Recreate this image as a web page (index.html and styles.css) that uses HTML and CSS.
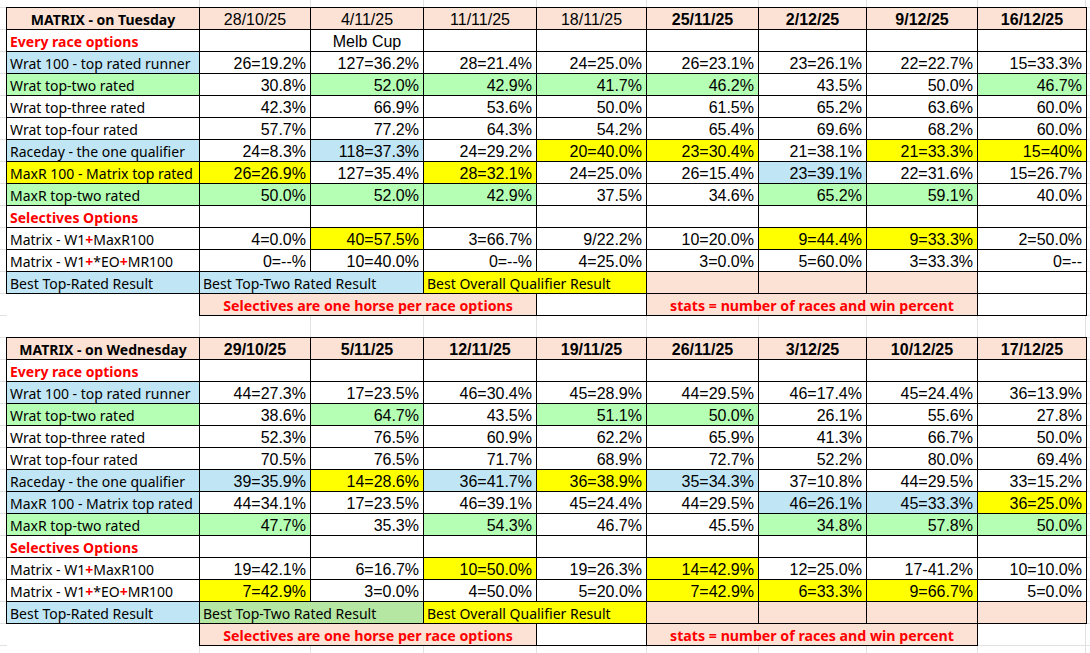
FILE: index.html
```html
<!DOCTYPE html>
<html>
<head>
<meta charset="utf-8">
<link rel="stylesheet" href="styles.css">
</head>
<body>
<div class="sheet">
<table class="matrix">
  <colgroup>
    <col class="c-a"><col class="c-b"><col class="c-c"><col class="c-d"><col class="c-e"><col class="c-f"><col class="c-g"><col class="c-h"><col class="c-i">
  </colgroup>
  <tr class="head">
    <td class="title">MATRIX - on Tuesday</td>
    <td class="date">28/10/25</td><td class="date">4/11/25</td><td class="date">11/11/25</td><td class="date">18/11/25</td>
    <td class="date bold">25/11/25</td><td class="date bold">2/12/25</td><td class="date bold">9/12/25</td><td class="date bold">16/12/25</td>
  </tr>
  <tr>
    <td class="lbl section">Every race options</td>
    <td></td><td class="note">Melb Cup</td><td></td><td></td><td></td><td></td><td></td><td></td>
  </tr>
  <tr>
    <td class="lbl blue">Wrat 100 - top rated runner</td>
    <td class="num">26=19.2%</td><td class="num">127=36.2%</td><td class="num">28=21.4%</td><td class="num">24=25.0%</td><td class="num">26=23.1%</td><td class="num">23=26.1%</td><td class="num">22=22.7%</td><td class="num">15=33.3%</td>
  </tr>
  <tr>
    <td class="lbl green">Wrat top-two rated</td>
    <td class="num">30.8%</td><td class="num green">52.0%</td><td class="num green">42.9%</td><td class="num green">41.7%</td><td class="num green">46.2%</td><td class="num">43.5%</td><td class="num">50.0%</td><td class="num green">46.7%</td>
  </tr>
  <tr>
    <td class="lbl">Wrat top-three rated</td>
    <td class="num">42.3%</td><td class="num">66.9%</td><td class="num">53.6%</td><td class="num">50.0%</td><td class="num">61.5%</td><td class="num">65.2%</td><td class="num">63.6%</td><td class="num">60.0%</td>
  </tr>
  <tr>
    <td class="lbl">Wrat top-four rated</td>
    <td class="num">57.7%</td><td class="num">77.2%</td><td class="num">64.3%</td><td class="num">54.2%</td><td class="num">65.4%</td><td class="num">69.6%</td><td class="num">68.2%</td><td class="num">60.0%</td>
  </tr>
  <tr>
    <td class="lbl blue">Raceday - the one qualifier</td>
    <td class="num">24=8.3%</td><td class="num blue">118=37.3%</td><td class="num">24=29.2%</td><td class="num yellow">20=40.0%</td><td class="num yellow">23=30.4%</td><td class="num">21=38.1%</td><td class="num yellow">21=33.3%</td><td class="num yellow">15=40%</td>
  </tr>
  <tr>
    <td class="lbl yellow">MaxR 100 - Matrix top rated</td>
    <td class="num yellow">26=26.9%</td><td class="num">127=35.4%</td><td class="num yellow">28=32.1%</td><td class="num">24=25.0%</td><td class="num">26=15.4%</td><td class="num blue">23=39.1%</td><td class="num">22=31.6%</td><td class="num">15=26.7%</td>
  </tr>
  <tr>
    <td class="lbl green">MaxR top-two rated</td>
    <td class="num green">50.0%</td><td class="num green">52.0%</td><td class="num green">42.9%</td><td class="num">37.5%</td><td class="num">34.6%</td><td class="num green">65.2%</td><td class="num green">59.1%</td><td class="num">40.0%</td>
  </tr>
  <tr>
    <td class="lbl section">Selectives Options</td>
    <td></td><td></td><td></td><td></td><td></td><td></td><td></td><td></td>
  </tr>
  <tr>
    <td class="lbl">Matrix - W1<span class="plus">+</span>MaxR100</td>
    <td class="num">4=0.0%</td><td class="num yellow">40=57.5%</td><td class="num">3=66.7%</td><td class="num">9/22.2%</td><td class="num">10=20.0%</td><td class="num yellow">9=44.4%</td><td class="num yellow">9=33.3%</td><td class="num">2=50.0%</td>
  </tr>
  <tr>
    <td class="lbl">Matrix - W1<span class="plus">+</span>*EO<span class="plus">+</span>MR100</td>
    <td class="num">0=--%</td><td class="num">10=40.0%</td><td class="num">0=--%</td><td class="num">4=25.0%</td><td class="num">3=0.0%</td><td class="num">5=60.0%</td><td class="num">3=33.3%</td><td class="num">0=--</td>
  </tr>
  <tr>
    <td class="lbl blue">Best Top-Rated Result</td>
    <td class="lbl blue" colspan="2">Best Top-Two Rated Result</td>
    <td class="lbl yellow" colspan="2">Best Overall Qualifier Result</td>
    <td class="peach"></td><td class="peach"></td><td class="peach"></td><td></td>
  </tr>
  <tr>
    <td class="blank"></td>
    <td class="banner peach" colspan="3">Selectives are one horse per race options</td>
    <td></td>
    <td class="banner peach" colspan="3">stats = number of races and win percent</td>
    <td></td>
  </tr>
</table>

<table class="matrix">
  <colgroup>
    <col class="c-a"><col class="c-b"><col class="c-c"><col class="c-d"><col class="c-e"><col class="c-f"><col class="c-g"><col class="c-h"><col class="c-i">
  </colgroup>
  <tr class="head">
    <td class="title">MATRIX - on Wednesday</td>
    <td class="date bold">29/10/25</td><td class="date bold">5/11/25</td><td class="date bold">12/11/25</td><td class="date bold">19/11/25</td>
    <td class="date bold">26/11/25</td><td class="date bold">3/12/25</td><td class="date bold">10/12/25</td><td class="date bold">17/12/25</td>
  </tr>
  <tr>
    <td class="lbl section">Every race options</td>
    <td></td><td></td><td></td><td></td><td></td><td></td><td></td><td></td>
  </tr>
  <tr>
    <td class="lbl blue">Wrat 100 - top rated runner</td>
    <td class="num">44=27.3%</td><td class="num">17=23.5%</td><td class="num">46=30.4%</td><td class="num">45=28.9%</td><td class="num">44=29.5%</td><td class="num">46=17.4%</td><td class="num">45=24.4%</td><td class="num">36=13.9%</td>
  </tr>
  <tr>
    <td class="lbl green">Wrat top-two rated</td>
    <td class="num">38.6%</td><td class="num green">64.7%</td><td class="num">43.5%</td><td class="num green">51.1%</td><td class="num green">50.0%</td><td class="num">26.1%</td><td class="num">55.6%</td><td class="num">27.8%</td>
  </tr>
  <tr>
    <td class="lbl">Wrat top-three rated</td>
    <td class="num">52.3%</td><td class="num">76.5%</td><td class="num">60.9%</td><td class="num">62.2%</td><td class="num">65.9%</td><td class="num">41.3%</td><td class="num">66.7%</td><td class="num">50.0%</td>
  </tr>
  <tr>
    <td class="lbl">Wrat top-four rated</td>
    <td class="num">70.5%</td><td class="num">76.5%</td><td class="num">71.7%</td><td class="num">68.9%</td><td class="num">72.7%</td><td class="num">52.2%</td><td class="num">80.0%</td><td class="num">69.4%</td>
  </tr>
  <tr>
    <td class="lbl blue">Raceday - the one qualifier</td>
    <td class="num blue">39=35.9%</td><td class="num yellow">14=28.6%</td><td class="num blue">36=41.7%</td><td class="num yellow">36=38.9%</td><td class="num blue">35=34.3%</td><td class="num">37=10.8%</td><td class="num">44=29.5%</td><td class="num">33=15.2%</td>
  </tr>
  <tr>
    <td class="lbl blue">MaxR 100 - Matrix top rated</td>
    <td class="num">44=34.1%</td><td class="num">17=23.5%</td><td class="num">46=39.1%</td><td class="num">45=24.4%</td><td class="num">44=29.5%</td><td class="num blue">46=26.1%</td><td class="num blue">45=33.3%</td><td class="num yellow">36=25.0%</td>
  </tr>
  <tr>
    <td class="lbl green">MaxR top-two rated</td>
    <td class="num green">47.7%</td><td class="num">35.3%</td><td class="num green">54.3%</td><td class="num">46.7%</td><td class="num">45.5%</td><td class="num green">34.8%</td><td class="num green">57.8%</td><td class="num green">50.0%</td>
  </tr>
  <tr>
    <td class="lbl section">Selectives Options</td>
    <td></td><td></td><td></td><td></td><td></td><td></td><td></td><td></td>
  </tr>
  <tr>
    <td class="lbl">Matrix - W1<span class="plus">+</span>MaxR100</td>
    <td class="num">19=42.1%</td><td class="num">6=16.7%</td><td class="num yellow">10=50.0%</td><td class="num">19=26.3%</td><td class="num yellow">14=42.9%</td><td class="num">12=25.0%</td><td class="num">17-41.2%</td><td class="num">10=10.0%</td>
  </tr>
  <tr>
    <td class="lbl">Matrix - W1<span class="plus">+</span>*EO<span class="plus">+</span>MR100</td>
    <td class="num yellow">7=42.9%</td><td class="num">3=0.0%</td><td class="num">4=50.0%</td><td class="num">5=20.0%</td><td class="num yellow">7=42.9%</td><td class="num yellow">6=33.3%</td><td class="num yellow">9=66.7%</td><td class="num">5=0.0%</td>
  </tr>
  <tr>
    <td class="lbl blue">Best Top-Rated Result</td>
    <td class="lbl olive" colspan="2">Best Top-Two Rated Result</td>
    <td class="lbl yellow" colspan="2">Best Overall Qualifier Result</td>
    <td class="peach"></td><td class="peach"></td><td class="peach"></td><td class="peach"></td>
  </tr>
  <tr>
    <td class="blank"></td>
    <td class="banner peach" colspan="3">Selectives are one horse per race options</td>
    <td></td>
    <td class="banner peach" colspan="3">stats = number of races and win percent</td>
    <td class="blank-end"></td>
  </tr>
</table>
</div>
</body>
</html>
```

FILE: styles.css
```css
html, body {
  margin: 0;
  padding: 0;
}

body {
  width: 1090px;
  height: 653px;
  overflow: hidden;
  background-color: #ffffff;
  background-image:
    linear-gradient(to right,
      transparent 199px, #e1e1e1 199px 200px,
      transparent 200px 310px, #e1e1e1 310px 311px,
      transparent 311px 423px, #e1e1e1 423px 424px,
      transparent 424px 536px, #e1e1e1 536px 537px,
      transparent 537px 646px, #e1e1e1 646px 647px,
      transparent 647px 758px, #e1e1e1 758px 759px,
      transparent 759px 866px, #e1e1e1 866px 867px,
      transparent 867px 977px, #e1e1e1 977px 978px,
      transparent 978px 1085px, #e1e1e1 1085px 1086px,
      transparent 1086px),
    repeating-linear-gradient(to bottom, #e1e1e1 0 1px, transparent 1px 22px);
  background-position: 0 0, 0 7px;
  color: #000;
}

.sheet {
  display: flex;
  flex-direction: column;
  gap: 21px;
  padding: 7px 0 0 6px;
}

.matrix {
  border-collapse: collapse;
  table-layout: fixed;
  width: 980px;
}

.c-a { width: 193px; }
.c-b { width: 111px; }
.c-c { width: 113px; }
.c-d { width: 113px; }
.c-e { width: 110px; }
.c-f { width: 112px; }
.c-g { width: 108px; }
.c-h { width: 111px; }
.c-i { width: 109px; }

.matrix tr {
  height: 22px;
}

.matrix td {
  border: 1px solid #000;
  background: #fff;
  padding: 2px 0 0 0;
  height: 19px;
  line-height: 19px;
  white-space: nowrap;
  overflow: hidden;
  font-family: "Liberation Sans", Arial, sans-serif;
  font-size: 16px;
}

.head td {
  background: #fbe2d5;
  text-align: center;
}

.matrix td.title {
  font-family: "Noto Sans", sans-serif;
  font-size: 14px;
  font-weight: 700;
}

.date.bold {
  font-weight: 700;
}

.matrix td.lbl {
  font-family: "Noto Sans", sans-serif;
  font-size: 14px;
  text-align: left;
  padding-left: 3px;
}

.matrix td.section {
  color: #ff0000;
  font-weight: 700;
}

.matrix td.num {
  text-align: right;
  padding-right: 4px;
}

.note {
  text-align: center;
}

.plus {
  color: #ff0000;
  font-weight: 700;
}

.matrix td.banner {
  font-family: "Noto Sans", sans-serif;
  font-size: 14.2px;
  font-weight: 700;
  color: #ff0000;
  text-align: center;
}

.matrix td.blue { background: #c0e6f5; }
.matrix td.green { background: #b4ffb4; }
.matrix td.olive { background: #b5e6a2; }
.matrix td.yellow { background: #ffff00; }
.matrix td.peach { background: #fbe2d5; }

.matrix td.blank {
  border-left: none;
  border-bottom: none;
}

.matrix td.blank-end {
  border-right: none;
  border-bottom: none;
  background: transparent;
}
```
